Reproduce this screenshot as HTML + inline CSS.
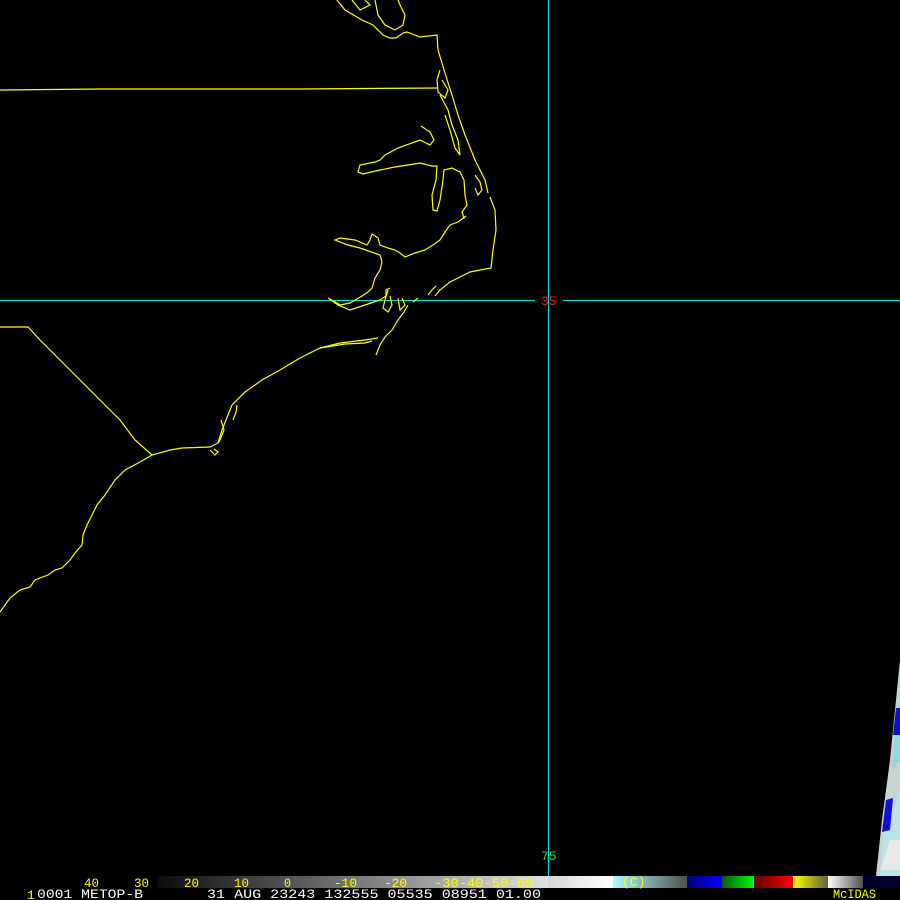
<!DOCTYPE html>
<html><head><meta charset="utf-8"><style>
html,body{margin:0;padding:0;background:#000;width:900px;height:900px;overflow:hidden}
svg{display:block}
text{font-family:"Liberation Mono",monospace;font-size:13px}
</style></head><body>
<svg width="900" height="900" viewBox="0 0 900 900" xmlns="http://www.w3.org/2000/svg">
<rect width="900" height="900" fill="#000"/>
<polygon points="900,660 900,876 876,876 882,820 890,760 896,700" fill="#c8d4d4"/>
<polygon points="900,700 900,760 892,770 896,720" fill="#8fd8dc"/>
<polygon points="900,790 900,876 880,876 884,830" fill="#b8e4e6"/>
<polygon points="896,708 900,708 900,735 893,735" fill="#1010c8"/>
<polygon points="886,800 893,798 890,830 882,832" fill="#1010d8"/>
<polygon points="890,840 900,840 900,870 880,870" fill="#e8e8e8"/>
<line x1="0" y1="300.5" x2="535" y2="300.5" stroke="#00e0e8" stroke-width="1"/>
<line x1="563" y1="300.5" x2="900" y2="300.5" stroke="#00e0e8" stroke-width="1"/>
<line x1="548.5" y1="0" x2="548.5" y2="876" stroke="#00e0e8" stroke-width="1"/>
<text x="541" y="305" fill="#ff2020" font-size="11">35</text>
<text x="541" y="860" fill="#20e020" font-size="11">75</text>
<g fill="none" stroke="#ffff00" stroke-width="1.2">
<polyline points="0,90 100,89 200,89 300,89 437,88"/>
<polyline points="0,327 28,327 40,340 60,360 80,380 100,400 120,420 135,440 152,455"/>
<polyline points="232,405 222,430 218,443 210,447 182,448 170,450 152,455 140,462 125,470 115,480 105,495 97,505 92,515 87,525 83,535 82,545 75,553 70,560 62,568 55,570 48,575 40,578 35,580 30,587 20,590 10,598 5,605 0,612"/>
<polyline points="232,405 245,392 262,380 280,370 300,358 320,348 340,343 365,340 378,338"/>
<polyline points="337,0 345,10 362,20 373,25 383,35 390,38 396,38 403,33 407,32 420,37 437,35 438,50 442,63 444,70 452,95 458,115 465,135 475,160 485,180 488,193"/>
<polyline points="352,0 360,10 370,5 365,0"/>
<polyline points="375,0 378,15 385,25 395,30 403,25 405,15 400,5 398,0"/>
<polyline points="490,197 495,210 496,230 493,250 491,268 480,270 470,272 458,278 450,282 440,290 435,296"/>
<polyline points="440,70 437,80 438,92 445,98 448,90 442,80"/>
<polyline points="440,95 448,110 452,125 458,140 460,155 455,148 450,130 445,115"/>
<polyline points="421,126 430,132 434,140 430,145 420,140 398,148 385,155 380,160 375,162 360,165 358,172 363,174 380,170 395,167 408,165 420,163 432,166 437,166 436,180 432,195 433,210 437,211 440,200 443,180 444,170 452,168 460,172 464,180 465,195 467,205 462,212 464,218 466,216 458,222 450,225 445,232 440,240 433,245 425,250 415,253 405,257 400,253 395,250 388,248 380,245 378,238 372,234 370,240 367,245 355,240 340,238 335,240 348,245 360,248 380,255 382,262 380,270 375,278 372,288 368,292 362,296 350,303 340,305 332,300 328,298 338,305 350,310 365,305 380,300 386,296 386,290 390,288"/>
<polyline points="475,175 480,182 482,190 478,195 475,188"/>
<polyline points="388,290 385,300 383,308 388,312 392,305 390,296"/>
<polyline points="398,298 400,310 405,305 402,298"/>
<polyline points="408,305 404,312 398,320 392,330 385,337 380,345 376,355"/>
<polyline points="320,348 345,344 365,343 372,341"/>
<polyline points="428,295 432,290 436,286"/>
<polyline points="413,302 418,298"/>
<polyline points="221,420 224,430 220,440 218,443"/>
<polyline points="210,450 215,455 218,452 214,449"/>
<polyline points="237,405 236,412 233,420"/>
</g>
<defs>
<linearGradient id="g1" x1="0" x2="1"><stop offset="0" stop-color="#0c0c0c"/><stop offset="1" stop-color="#e0e0e0"/></linearGradient>
<linearGradient id="g2" x1="0" x2="1"><stop offset="0" stop-color="#d8d8d8"/><stop offset="1" stop-color="#ffffff"/></linearGradient>
<linearGradient id="g3" x1="0" x2="1"><stop offset="0" stop-color="#a8fcfc"/><stop offset="1" stop-color="#505050"/></linearGradient>
<linearGradient id="g4" x1="0" x2="1"><stop offset="0" stop-color="#000080"/><stop offset="1" stop-color="#0000ff"/></linearGradient>
<linearGradient id="g5" x1="0" x2="1"><stop offset="0" stop-color="#006000"/><stop offset="1" stop-color="#00ff00"/></linearGradient>
<linearGradient id="g6" x1="0" x2="1"><stop offset="0" stop-color="#600000"/><stop offset="1" stop-color="#ff0000"/></linearGradient>
<linearGradient id="g7" x1="0" x2="1"><stop offset="0" stop-color="#ffff00"/><stop offset="1" stop-color="#606040"/></linearGradient>
<linearGradient id="g8" x1="0" x2="1"><stop offset="0" stop-color="#ffffff"/><stop offset="1" stop-color="#505050"/></linearGradient>
</defs>
<rect x="157" y="876" width="391" height="12" fill="url(#g1)"/>
<rect x="548" y="876" width="65" height="12" fill="url(#g2)"/>
<rect x="613" y="876" width="74" height="12" fill="url(#g3)"/>
<rect x="687" y="876" width="35" height="12" fill="url(#g4)"/>
<rect x="722" y="876" width="32" height="12" fill="url(#g5)"/>
<rect x="754" y="876" width="39" height="12" fill="url(#g6)"/>
<rect x="793" y="876" width="35" height="12" fill="url(#g7)"/>
<rect x="828" y="876" width="35" height="12" fill="url(#g8)"/>
<rect x="863" y="876" width="37" height="12" fill="#000030"/>
<g fill="#ffff00" font-size="14">
<text x="84" y="887" textLength="15" lengthAdjust="spacingAndGlyphs">40</text>
<text x="134" y="887" textLength="15" lengthAdjust="spacingAndGlyphs">30</text>
<text x="184" y="887" textLength="15" lengthAdjust="spacingAndGlyphs">20</text>
<text x="234" y="887" textLength="15" lengthAdjust="spacingAndGlyphs">10</text>
<text x="284" y="887" textLength="7" lengthAdjust="spacingAndGlyphs">0</text>
<text x="334" y="887" textLength="23" lengthAdjust="spacingAndGlyphs">-10</text>
<text x="384" y="887" textLength="23" lengthAdjust="spacingAndGlyphs">-20</text>
<text x="434" y="887" textLength="99" lengthAdjust="spacingAndGlyphs">-30-40-50-60</text>
<text x="622" y="886" font-size="11">(C)</text>
<text x="833" y="898" textLength="43" lengthAdjust="spacingAndGlyphs">McIDAS</text>
<text x="27" y="899" font-size="11">1</text>
</g>
<g fill="#fff" font-size="14">
<text x="37" y="898" textLength="106" lengthAdjust="spacingAndGlyphs">0001 METOP-B</text>
<text x="207" y="898" textLength="334" lengthAdjust="spacingAndGlyphs">31 AUG 23243 132555 05535 08951 01.00</text>
</g>
</svg>
</body></html>
